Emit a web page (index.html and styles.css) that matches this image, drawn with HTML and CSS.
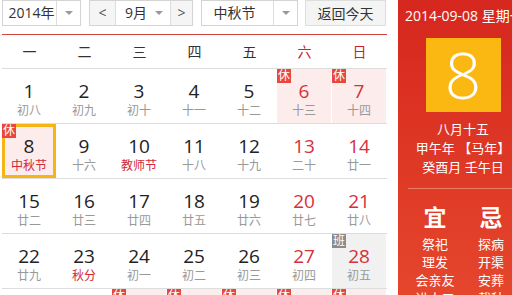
FILE: index.html
```html
<!DOCTYPE html>
<html lang="zh-CN">
<head>
  <meta charset="UTF-8" />
  <title>万年历</title>
  <link rel="stylesheet" href="styles.css">
</head>
<body>
  <div class="page">
    <div class="cal">
      <div class="toolbar">
        <div class="sel sel-year">
          <span class="sel-text">2014年</span>
          <span class="sel-arrow"><i class="tri"></i></span>
        </div>
        <div class="sel sel-month">
          <span class="nav">&lt;</span>
          <span class="sel-text">9月</span>
          <span class="sel-arrow plain"><i class="tri"></i></span>
          <span class="nav right">&gt;</span>
        </div>
        <div class="sel sel-fest">
          <span class="sel-text">中秋节</span>
          <span class="sel-arrow"><i class="tri"></i></span>
        </div>
        <button class="today-btn">返回今天</button>
      </div>

      <div class="weekdays">
        <span>一</span><span>二</span><span>三</span><span>四</span><span>五</span>
        <span class="we">六</span><span class="we">日</span>
      </div>

      <div class="week">
        <div class="day"><b>1</b><em>初八</em></div>
        <div class="day"><b>2</b><em>初九</em></div>
        <div class="day"><b>3</b><em>初十</em></div>
        <div class="day"><b>4</b><em>十一</em></div>
        <div class="day"><b>5</b><em>十二</em></div>
        <div class="day we rest"><i class="tag">休</i><b>6</b><em>十三</em></div>
        <div class="day we rest"><i class="tag">休</i><b>7</b><em>十四</em></div>
      </div>
      <div class="week">
        <div class="day rest current"><i class="tag">休</i><b>8</b><em class="fest">中秋节</em></div>
        <div class="day"><b>9</b><em>十六</em></div>
        <div class="day"><b>10</b><em class="fest">教师节</em></div>
        <div class="day"><b>11</b><em>十八</em></div>
        <div class="day"><b>12</b><em>十九</em></div>
        <div class="day we"><b>13</b><em>二十</em></div>
        <div class="day we"><b>14</b><em>廿一</em></div>
      </div>
      <div class="week">
        <div class="day"><b>15</b><em>廿二</em></div>
        <div class="day"><b>16</b><em>廿三</em></div>
        <div class="day"><b>17</b><em>廿四</em></div>
        <div class="day"><b>18</b><em>廿五</em></div>
        <div class="day"><b>19</b><em>廿六</em></div>
        <div class="day we"><b>20</b><em>廿七</em></div>
        <div class="day we"><b>21</b><em>廿八</em></div>
      </div>
      <div class="week">
        <div class="day"><b>22</b><em>廿九</em></div>
        <div class="day"><b>23</b><em class="fest">秋分</em></div>
        <div class="day"><b>24</b><em>初一</em></div>
        <div class="day"><b>25</b><em>初二</em></div>
        <div class="day"><b>26</b><em>初三</em></div>
        <div class="day we"><b>27</b><em>初四</em></div>
        <div class="day we work"><i class="tag">班</i><b>28</b><em>初五</em></div>
      </div>
      <div class="week">
        <div class="day"><b>29</b><em>初六</em></div>
        <div class="day"><b>30</b><em>初七</em></div>
        <div class="day we rest"><i class="tag">休</i><b>1</b><em class="fest">国庆节</em></div>
        <div class="day we rest"><i class="tag">休</i><b>2</b><em>初九</em></div>
        <div class="day we rest"><i class="tag">休</i><b>3</b><em>初十</em></div>
        <div class="day we rest"><i class="tag">休</i><b>4</b><em>十一</em></div>
        <div class="day we rest"><i class="tag">休</i><b>5</b><em>十二</em></div>
      </div>
    </div>

    <div class="side">
      <div class="side-date">2014-09-08 星期一</div>
      <div class="big-day">8</div>
      <div class="lunar">
        <p>八月十五</p>
        <p>甲午年 【马年】</p>
        <p>癸酉月 壬午日</p>
      </div>
      <div class="yiji">
        <div class="col">
          <h3>宜</h3>
          <p>祭祀</p><p>理发</p><p>会亲友</p><p>进人口</p>
        </div>
        <div class="col">
          <h3>忌</h3>
          <p>探病</p><p>开渠</p><p>安葬</p><p>栽种</p>
        </div>
      </div>
    </div>
  </div>
</body>
</html>
```

FILE: styles.css
```css
* { box-sizing: border-box; }
body {
  margin: 0;
  overflow: hidden;
  font-family: "Open Sans", "Noto Sans CJK SC", sans-serif;
  color: #333;
  background: #fff;
}
.page { display: flex; width: 528px; }
.cal { width: 385px; margin-left: 2px; }

/* toolbar */
.toolbar {
  display: flex;
  height: 35px;
  padding-bottom: 9px;
  border-bottom: 1px solid #d2413a;
}
.sel {
  display: flex;
  height: 26px;
  border: 1px solid #d4d4d4;
  font-size: 14px;
  line-height: 24px;
  background: #fff;
}
.sel-text { flex: 1; text-align: center; }
.sel-arrow {
  width: 24px;
  border-left: 1px solid #ddd;
  display: flex;
  align-items: center;
  justify-content: center;
}
.sel-arrow.plain { border-left: none; width: 22px; }
.tri {
  width: 0; height: 0;
  border-left: 4px solid transparent;
  border-right: 4px solid transparent;
  border-top: 4px solid #999;
}
.sel-year { width: 79px; margin-right: 8px; }
.sel-year .sel-text { padding-left: 4px; }
.sel-month { width: 104px; margin-right: 8px; }
.sel-month .sel-text { padding-left: 8px; }
.nav {
  width: 26px;
  text-align: center;
  background: #f5f5f5;
  border-right: 1px solid #ddd;
  color: #555;
}
.nav.right { width: 22px; border-right: none; border-left: 1px solid #ddd; }
.sel-fest { width: 97px; margin-right: 7px; }
.sel-fest .sel-text { padding-right: 6px; }
.today-btn {
  width: 81px;
  height: 26px;
  padding: 0;
  border: 1px solid #ddd;
  background: #f4f4f4;
  font-family: inherit;
  font-size: 14px;
  color: #333;
}

/* weekdays */
.weekdays {
  display: grid;
  grid-template-columns: repeat(7, 55px);
  height: 34px;
  border-bottom: 1px solid #ddd;
  font-size: 14px;
  line-height: 33px;
  text-align: center;
}
.weekdays .we { color: #c8232c; }

/* days */
.week {
  display: grid;
  grid-template-columns: repeat(7, 55px);
  height: 55px;
  border-bottom: 1px solid #ddd;
}
.day {
  position: relative;
  height: 54px;
  margin-right: 1px;
  padding-top: 10px;
  text-align: center;
}
.day b {
  display: block;
  font-weight: normal;
  font-size: 19px;
  line-height: 24px;
  color: #222;
}
.day em {
  display: block;
  font-style: normal;
  font-size: 12px;
  line-height: 16px;
  color: #999;
}
.day.we b { color: #d6303b; }
.day em.fest { color: #d0293a; }
.day.rest { background: #fdecec; }
.day.work { background: #f1f1f1; }
.day.current { box-shadow: inset 0 0 0 3px #f6b514; }
.tag {
  position: absolute;
  top: 0;
  left: 0;
  width: 14px;
  height: 14px;
  font-style: normal;
  font-size: 12px;
  line-height: 14px;
  color: #fff;
  background: #e9473b;
}
.work .tag { background: #8b8b8b; }

/* side panel */
.side {
  width: 130px;
  margin-left: 11px;
  height: 295px;
  padding-top: 7px;
  color: #fff;
  text-align: center;
  background: linear-gradient(#d6271e, #e5462c);
}
.side-date {
  text-align: left;
  padding-left: 7px;
  font-size: 14px;
  line-height: 18px;
  white-space: nowrap;
}
.big-day {
  width: 75px;
  height: 74px;
  margin: 13px auto 0;
  background: #fcb812;
  font-size: 64px;
  font-weight: 300;
  line-height: 74px;
}
.lunar { margin-top: 8px; padding-bottom: 11px; margin-left: 10px; margin-right: 10px; border-bottom: 1px solid #ea7d66; }
.lunar p { margin: 0; font-size: 13px; line-height: 19px; }
.yiji {
  display: grid;
  grid-template-columns: 56px 56px;
  margin-left: 9px;
  padding-top: 15px;
}
.yiji h3 {
  margin: 0 0 5px;
  font-size: 23px;
  line-height: 26px;
  font-weight: bold;
}
.yiji p { margin: 0; font-size: 13px; line-height: 18px; }
```
